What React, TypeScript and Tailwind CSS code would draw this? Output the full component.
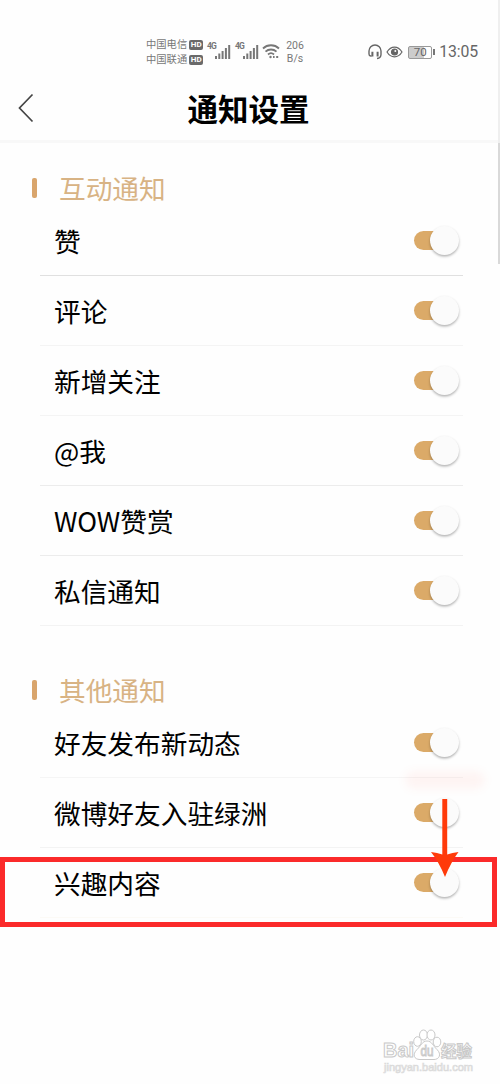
type Item = { label: string; line: string };

const interactive: Item[] = [
  { label: '赞', line: 'border-[#e0e0e0]' },
  { label: '评论', line: 'border-[#f4f4f4]' },
  { label: '新增关注', line: 'border-[#f4f4f4]' },
  { label: '@我', line: 'border-[#ececec]' },
  { label: 'WOW赞赏', line: 'border-[#ececec]' },
  { label: '私信通知', line: 'border-[#f3f3f3]' },
];

const others: Item[] = [
  { label: '好友发布新动态', line: 'border-[#f5f5f5]' },
  { label: '微博好友入驻绿洲', line: 'border-[#f3f3f3]' },
  { label: '兴趣内容', line: 'border-[#fcfaf6]' },
];

function Signal() {
  return (
    <div className="relative w-[24px] h-[18px]">
      <span className="absolute left-0 top-0 text-[8.5px] leading-[9px] font-bold tracking-[-0.8px]">4G</span>
      <svg className="absolute left-[8px] top-[2px]" width="16" height="16" viewBox="0 0 16 16" fill="currentColor">
        <rect x="0" y="12" width="2" height="3" />
        <rect x="3.3" y="9.5" width="2" height="5.5" />
        <rect x="6.6" y="7" width="2" height="8" />
        <rect x="9.9" y="4" width="2" height="11" />
        <rect x="13.2" y="1" width="2" height="14" />
      </svg>
    </div>
  );
}

function Carrier({ name }: { name: string }) {
  return (
    <div className="flex items-center gap-[2px] h-[15px]">
      <span className="text-[10.3px] leading-[15px]">{name}</span>
      <span className="w-[14px] h-[10px] rounded-[2px] bg-[#6a6a6a] text-white text-[8px] leading-[10px] font-bold text-center">HD</span>
    </div>
  );
}

function StatusBar() {
  return (
    <div className="h-[78px] pt-[37px] pl-[146px] pr-[22px] flex items-start text-[#777]">
      <div className="w-[61px]">
        <Carrier name="中国电信" />
        <Carrier name="中国联通" />
      </div>
      <div className="flex gap-[4px] pt-[5px]">
        <Signal />
        <Signal />
      </div>
      <svg className="mt-[6px] ml-[3px]" width="18" height="17" viewBox="0 0 18 17" fill="none" stroke="currentColor" strokeWidth="1.8">
        <path d="M1 5.5a11.5 11.5 0 0 1 16 0M3.5 8.7a8 8 0 0 1 11 0M6 11.5a4.5 4.5 0 0 1 6 0" />
        <circle cx="8.5" cy="14" r="1.2" fill="currentColor" stroke="none" />
        <path d="M11 14h1.6M14.2 14h2" />
      </svg>
      <div className="ml-[4px] w-[22px] pt-[3px] text-[10.5px] leading-[12.5px] text-center">
        206
        <br />
        B/s
      </div>
      <div className="ml-auto pt-[4px] flex items-center h-[26px] text-[#666]">
        <svg width="14" height="16" viewBox="0 0 14 16" fill="none" stroke="currentColor" strokeWidth="1.4">
          <path d="M3.6 12H2.8A2 2 0 0 1 1 10V7a6 6 0 0 1 12 0v3.6c0 2.4-1.5 3.7-4 3.9" />
          <path d="M4.4 7.8v4.6M9.6 7.8v4.6" strokeWidth="2" />
        </svg>
        <svg className="ml-[4px]" width="17" height="12" viewBox="0 0 17 12" fill="none" stroke="currentColor" strokeWidth="1.2">
          <path d="M1 6c4-6.5 11-6.5 15 0c-4 6.5-11 6.5-15 0Z" />
          <circle cx="8.5" cy="6" r="3" fill="currentColor" />
          <circle cx="9.3" cy="5" r="1" fill="white" stroke="none" />
        </svg>
        <div className="ml-[5px] w-[24px] h-[13px] rounded-[2px] border border-[#999] bg-linear-to-r from-[#ccc] from-70% to-white to-70% text-[11.5px] leading-[11.5px] text-center">70</div>
        <div className="ml-[1px] w-[2px] h-[6px] bg-[#777]" />
        <span className="ml-[4px] text-[15.8px] leading-[20px] tracking-[-0.1px]">13:05</span>
      </div>
    </div>
  );
}

function Toggle() {
  return (
    <div className="relative w-[46px] h-[30px]">
      <div className="absolute left-0 top-[5px] w-[36px] h-[19px] rounded-full bg-[#dbaa68]" />
      <div className="absolute right-[1px] top-0 size-[29px] rounded-full bg-[#fbfbfb] shadow-[0_1.5px_2.5px_rgba(0,0,0,0.3)]" />
    </div>
  );
}

function Section({ title, items }: { title: string; items: Item[] }) {
  return (
    <section>
      <div className="flex items-center h-[36px] pl-[32px] text-[#d8b384]">
        <div className="w-[5px] h-[20px] rounded-[2px] bg-[#d9a56c]" />
        <h2 className="ml-[22px] text-[26.7px] leading-[36px] font-normal">{title}</h2>
      </div>
      {items.map((item) => (
        <div key={item.label} className={`flex items-center justify-between h-[70px] ml-[40px] mr-[37px] pl-[14px] pr-[3px] border-b ${item.line}`}>
          <span className="text-[26.7px] leading-[36px] text-black">{item.label}</span>
          <Toggle />
        </div>
      ))}
    </section>
  );
}

function Watermark() {
  return (
    <svg className="absolute left-[378px] top-[1024px]" width="100" height="56" viewBox="0 0 100 56" fill="white" stroke="#c9c9c9" strokeWidth="1">
      <g fontFamily="Liberation Sans, Noto Sans CJK SC, sans-serif">
        <text x="5" y="33" fontSize="20" fontWeight="bold" textLength="31" lengthAdjust="spacingAndGlyphs">Bai</text>
        <ellipse cx="39.5" cy="17.5" rx="3.8" ry="4.8" />
        <ellipse cx="45.5" cy="11" rx="4" ry="5" />
        <ellipse cx="53" cy="11" rx="4" ry="5" />
        <ellipse cx="59" cy="18" rx="3.8" ry="4.8" />
        <path d="M49 17c5 0 6 5 10 8.500c5 5 2 10-3 10h-14c-6 0-8-5-3-10c4-3.500 5-8.500 10-8.500Z" />
        <text x="42.5" y="32" fontSize="14" textLength="13" lengthAdjust="spacingAndGlyphs">du</text>
        <text x="63" y="33" fontSize="15.5" fontWeight="bold" textLength="31" lengthAdjust="spacingAndGlyphs">经验</text>
        <text x="6" y="46.5" fontSize="10" strokeWidth="0.7" stroke="#dadada" textLength="89" lengthAdjust="spacingAndGlyphs">jingyan.baidu.com</text>
      </g>
    </svg>
  );
}

export default function App() {
  return (
    <div className="relative w-[500px] h-[1084px] overflow-hidden bg-[#fefefe] font-['Roboto','Noto_Sans_CJK_SC',sans-serif]">
      <StatusBar />
      <header className="relative h-[65px] flex items-center justify-center border-b-3 border-[#f8f8f8]">
        <svg className="absolute left-[17px] top-[15px]" width="18" height="30" viewBox="0 0 18 30" fill="none" stroke="#444" strokeWidth="1.7">
          <path d="M15.5 1.5L2.5 15L15.5 28.5" />
        </svg>
        <h1 className="pr-[3px] pt-[4px] text-[30.5px] leading-[40px] font-bold text-black">通知设置</h1>
      </header>

      <main className="pt-[27px] flex flex-col gap-[46px] font-['Noto_Sans_CJK_SC',sans-serif]">
        <Section title="互动通知" items={interactive} />
        <Section title="其他通知" items={others} />
      </main>

      <div className="absolute right-0 top-0 w-[2px] h-[143px] bg-[#efefef]" />
      <div className="absolute right-0 top-[143px] w-[2px] h-[121px] bg-[#d9d9d9]" />
      <div className="absolute left-[405px] top-[771px] w-[80px] h-[18px] rounded-full bg-[#ff3b1f]/5 blur-[4px]" />
      <div className="absolute left-0 top-[857px] w-[497px] h-[70px] border-[5px] border-[#fb2a2a]" />
      <svg className="absolute left-[430px] top-[798px]" width="30" height="82" viewBox="0 0 30 82" fill="#ff3a0a">
        <path d="M12.3 1h4.900v55.500q5-2 11.300-2.500Q21 64 15 79Q9 64 1 54q6.300.5 11.300 2.500Z" />
      </svg>
      <Watermark />
    </div>
  );
}
